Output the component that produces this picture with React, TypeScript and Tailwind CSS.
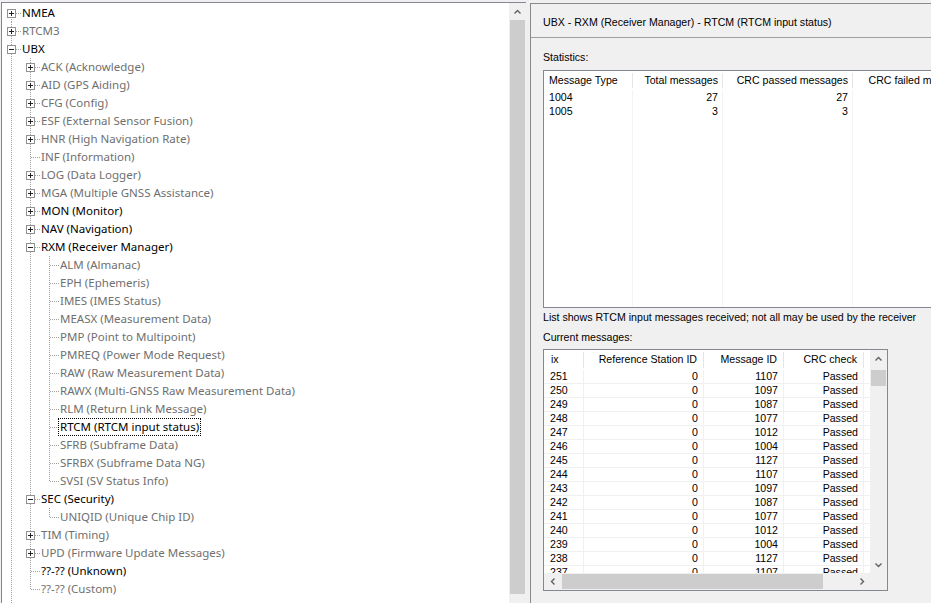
import React from 'react'

type TreeNode = {
  label: string
  dark?: boolean
  box?: 'plus' | 'minus'
  selected?: boolean
  children?: TreeNode[]
}

const leaf = (label: string, dark = false, selected = false): TreeNode => ({ label, dark, selected })
const plus = (label: string, dark = false): TreeNode => ({ label, dark, box: 'plus' })

const tree: TreeNode[] = [
  plus('NMEA', true),
  plus('RTCM3'),
  {
    label: 'UBX',
    dark: true,
    box: 'minus',
    children: [
      plus('ACK (Acknowledge)'),
      plus('AID (GPS Aiding)'),
      plus('CFG (Config)'),
      plus('ESF (External Sensor Fusion)'),
      plus('HNR (High Navigation Rate)'),
      leaf('INF (Information)'),
      plus('LOG (Data Logger)'),
      plus('MGA (Multiple GNSS Assistance)'),
      plus('MON (Monitor)', true),
      plus('NAV (Navigation)', true),
      {
        label: 'RXM (Receiver Manager)',
        dark: true,
        box: 'minus',
        children: [
          leaf('ALM (Almanac)'),
          leaf('EPH (Ephemeris)'),
          leaf('IMES (IMES Status)'),
          leaf('MEASX (Measurement Data)'),
          leaf('PMP (Point to Multipoint)'),
          leaf('PMREQ (Power Mode Request)'),
          leaf('RAW (Raw Measurement Data)'),
          leaf('RAWX (Multi-GNSS Raw Measurement Data)'),
          leaf('RLM (Return Link Message)'),
          leaf('RTCM (RTCM input status)', true, true),
          leaf('SFRB (Subframe Data)'),
          leaf('SFRBX (Subframe Data NG)'),
          leaf('SVSI (SV Status Info)'),
        ],
      },
      {
        label: 'SEC (Security)',
        dark: true,
        box: 'minus',
        children: [leaf('UNIQID (Unique Chip ID)')],
      },
      plus('TIM (Timing)'),
      plus('UPD (Firmware Update Messages)'),
      leaf('??-?? (Unknown)', true),
      leaf('??-?? (Custom)'),
    ],
  },
  plus('UNKNOWN'),
]

type Row = { node: TreeNode; guides: boolean[]; first: boolean; last: boolean }

function flatten(nodes: TreeNode[], depth: number, guides: boolean[], out: Row[]) {
  nodes.forEach((n, i) => {
    const last = i === nodes.length - 1
    out.push({ node: n, guides, first: depth === 0 && i === 0, last })
    if (n.box === 'minus' && n.children) flatten(n.children, depth + 1, [...guides, !last], out)
  })
  return out
}

const treeRows = flatten(tree, 0, [], [])

const DOT = '#a0a0a0'

function Guide({ show }: { show: boolean }) {
  return (
    <svg width="19" height="18" className="shrink-0">
      {show && (
        <line x1="9.5" y1="0" x2="9.5" y2="18" stroke={DOT} strokeDasharray="1 1" shapeRendering="crispEdges" />
      )}
    </svg>
  )
}

function Connector({ first, last, box }: { first: boolean; last: boolean; box?: 'plus' | 'minus' }) {
  return (
    <svg width="19" height="18" className="shrink-0">
      <line x1="9.5" y1={first ? 9 : 0} x2="9.5" y2={last ? 9 : 18} stroke={DOT} strokeDasharray="1 1" shapeRendering="crispEdges" />
      <line x1="10" y1="9.5" x2="19" y2="9.5" stroke={DOT} strokeDasharray="1 1" shapeRendering="crispEdges" />
      {box && (
        <>
          <rect x="5.5" y="5.5" width="8" height="8" fill="#fff" stroke="#919191" shapeRendering="crispEdges" />
          <line x1="7" y1="9.5" x2="12" y2="9.5" stroke="#222" shapeRendering="crispEdges" />
          {box === 'plus' && <line x1="9.5" y1="7" x2="9.5" y2="12" stroke="#222" shapeRendering="crispEdges" />}
        </>
      )}
    </svg>
  )
}

function TreeRow({ row }: { row: Row }) {
  const { node } = row
  return (
    <div className="flex h-[18px] items-center whitespace-nowrap">
      {row.guides.map((g, i) => (
        <Guide key={i} show={g} />
      ))}
      <Connector first={row.first} last={row.last} box={node.box} />
      <span
        className={`-ml-[1px] flex h-[18px] items-center border px-[1px] text-[11.5px] ${
          node.selected ? 'border-dotted border-black' : 'border-transparent'
        } ${node.dark ? 'text-black' : 'text-[#6f6f6f]'}`}
      >
        {node.label}
      </span>
    </div>
  )
}

function Chevron({ dir }: { dir: 'up' | 'down' | 'left' | 'right' }) {
  const pts = {
    up: '0.5,4.5 3.5,1.5 6.5,4.5',
    down: '0.5,1.5 3.5,4.5 6.5,1.5',
    left: '4.5,0.5 1.5,3.5 4.5,6.5',
    right: '1.5,0.5 4.5,3.5 1.5,6.5',
  }[dir]
  const horiz = dir === 'left' || dir === 'right'
  return (
    <svg width={horiz ? 6 : 7} height={horiz ? 7 : 6}>
      <polyline points={pts} fill="none" stroke="#606060" strokeWidth="1.4" />
    </svg>
  )
}

const ids = [1107, 1097, 1087, 1077, 1012, 1004, 1127]
const messages = Array.from({ length: 15 }, (_, i) => ({ ix: 251 - i, ref: 0, id: ids[i % 7] }))

const stats = [
  { type: '1004', total: 27, passed: 27 },
  { type: '1005', total: 3, passed: 3 },
]

export default function App() {
  return (
    <div className="flex h-[603px] w-[931px] overflow-hidden bg-[#f0f0f0]">
      {/* tree pane */}
      <div className="ml-[1px] mt-[2px] flex h-[640px] w-[525px] shrink-0 border-l border-t border-[#828790] bg-white font-['Noto_Sans',sans-serif]">
        <div className="w-[507px] overflow-hidden pt-[1px]">
          {treeRows.map((r, i) => (
            <TreeRow key={i} row={r} />
          ))}
        </div>
        <div className="flex w-[17px] flex-col bg-[#f0f0f0]">
          <div className="flex h-[17px] items-center justify-center">
            <Chevron dir="up" />
          </div>
          <div className="mx-[1px] h-[574px] bg-[#cdcdcd]" />
          <div className="mt-[2px] flex h-[17px] items-center justify-center">
            <Chevron dir="down" />
          </div>
        </div>
      </div>

      {/* detail pane */}
      <div className="ml-[4px] mt-[3px] flex h-[640px] flex-1 flex-col overflow-hidden border-l border-t border-[#8a8a8a] font-['Liberation_Sans',Arial,sans-serif] text-[10.6px] text-black">
        <div className="ml-[12px] mt-[12px] h-[13px] leading-[13px] whitespace-nowrap">
          UBX - RXM (Receiver Manager) - RTCM (RTCM input status)
        </div>
        <div className="mt-[8px] h-px bg-[#a0a0a0]" />
        <div className="ml-[12px] mt-[13px] h-[13px] leading-[13px]">Statistics:</div>

        {/* statistics list */}
        <div className="ml-[12px] mt-[6px] flex h-[238px] w-[440px] shrink-0 flex-col border border-[#828790] bg-white">
          <div className="flex h-[19px] shrink-0 items-center whitespace-nowrap">
            <div className="w-[89px] border-r border-[#e5e5e5] pl-[5px]">Message Type</div>
            <div className="w-[90px] border-r border-[#e5e5e5] pr-[4px] text-right">Total messages</div>
            <div className="w-[130px] border-r border-[#e5e5e5] pr-[4px] text-right">CRC passed messages</div>
            <div className="w-[123px] border-r border-[#e5e5e5] pr-[4px] text-right">CRC failed messages</div>
          </div>
          <div className="flex flex-1">
            <div className="w-[89px] border-r border-[#f4f4f4] pl-[5px]">
              {stats.map((s) => (
                <div key={s.type} className="h-[14px] leading-[14px]">{s.type}</div>
              ))}
            </div>
            <div className="w-[90px] border-r border-[#f4f4f4] pr-[4px] text-right">
              {stats.map((s) => (
                <div key={s.type} className="h-[14px] leading-[14px]">{s.total}</div>
              ))}
            </div>
            <div className="w-[130px] border-r border-[#f4f4f4] pr-[4px] text-right">
              {stats.map((s) => (
                <div key={s.type} className="h-[14px] leading-[14px]">{s.passed}</div>
              ))}
            </div>
            <div className="w-[123px] border-r border-[#f4f4f4]" />
          </div>
        </div>

        <div className="ml-[12px] mt-[3px] h-[13px] leading-[13px] whitespace-nowrap">
          List shows RTCM input messages received; not all may be used by the receiver
        </div>
        <div className="ml-[12px] mt-[7px] h-[13px] leading-[13px]">Current messages:</div>

        {/* current messages list */}
        <div className="ml-[12px] mt-[5px] flex h-[242px] w-[345px] shrink-0 flex-col border border-[#828790] bg-white">
          <div className="flex h-[223px]">
            <div className="flex-1 overflow-hidden">
              <div className="flex h-[20px] items-center whitespace-nowrap">
                <div className="w-[40px] border-r border-[#e5e5e5] pl-[7px]">ix</div>
                <div className="w-[120px] border-r border-[#e5e5e5] pr-[6px] text-right">Reference Station ID</div>
                <div className="w-[80px] border-r border-[#e5e5e5] pr-[6px] text-right">Message ID</div>
                <div className="w-[80px] border-r border-[#e5e5e5] pr-[6px] text-right">CRC check</div>
              </div>
              {messages.map((m) => (
                <div key={m.ix} className="flex h-[14px] border-b border-[#f0f0f0] leading-[13px]">
                  <div className="w-[40px] border-r border-[#f0f0f0] pl-[6px]">{m.ix}</div>
                  <div className="w-[120px] border-r border-[#f0f0f0] pr-[5px] text-right">{m.ref}</div>
                  <div className="w-[80px] border-r border-[#f0f0f0] pr-[5px] text-right">{m.id}</div>
                  <div className="w-[80px] border-r border-[#f0f0f0] pr-[5px] text-right">Passed</div>
                </div>
              ))}
            </div>
            <div className="flex w-[17px] flex-col bg-[#f0f0f0]">
              <div className="flex h-[17px] items-center justify-center">
                <Chevron dir="up" />
              </div>
              <div className="mx-[1px] mt-[3px] h-[16px] bg-[#cdcdcd]" />
              <div className="flex-1" />
              <div className="flex h-[17px] items-center justify-center">
                <Chevron dir="down" />
              </div>
            </div>
          </div>
          <div className="flex h-[17px] bg-[#f0f0f0]">
            <div className="flex w-[17px] items-center justify-center">
              <Chevron dir="left" />
            </div>
            <div className="my-[1px] ml-[1px] w-[261px] bg-[#cdcdcd]" />
            <div className="flex-1" />
            <div className="flex w-[17px] items-center justify-center">
              <Chevron dir="right" />
            </div>
            <div className="w-[17px]" />
          </div>
        </div>
      </div>
    </div>
  )
}
